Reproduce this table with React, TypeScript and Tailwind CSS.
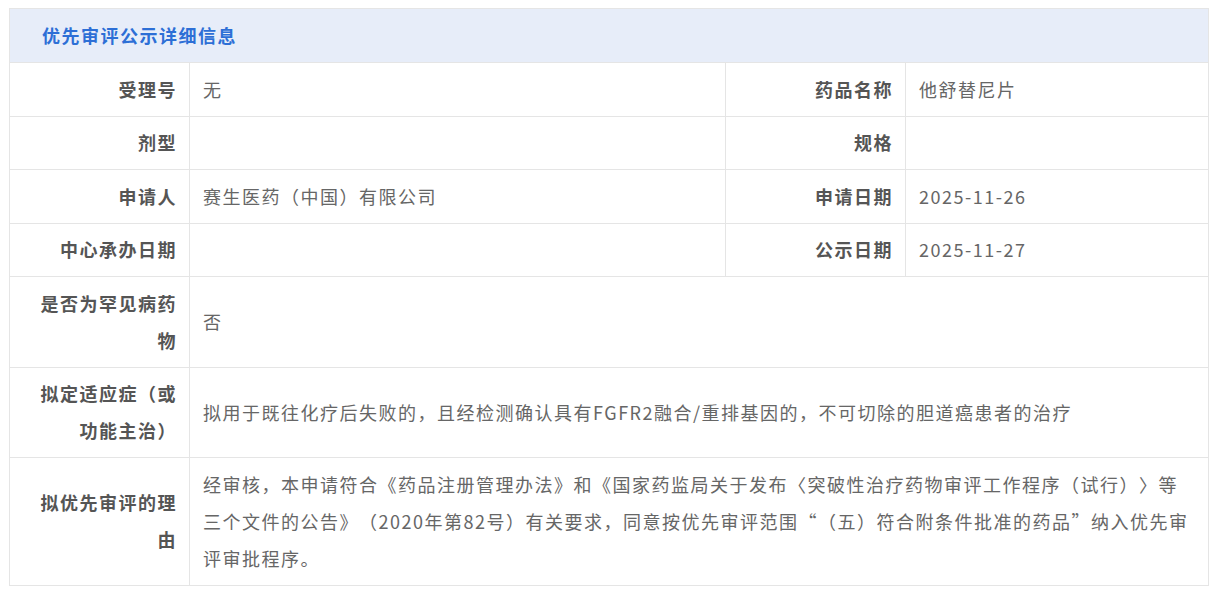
import React from "react";

const font = { fontFamily: '"Microsoft YaHei", "Noto Sans CJK SC", "Noto Sans", sans-serif' };

function Label({ children, className = "" }: { children: React.ReactNode; className?: string }) {
  return (
    <div
      className={`flex items-center justify-end border-r border-b border-[#e5e5e5] pl-[20px] pr-[12px] py-[7.75px] text-right text-[18px] font-bold leading-[37px] tracking-[1.5px] text-[#555] [text-spacing-trim:space-all] ${className}`}
    >
      <div>{children}</div>
    </div>
  );
}

function Value({ children, className = "" }: { children?: React.ReactNode; className?: string }) {
  return (
    <div
      className={`flex items-center border-r border-b border-[#e5e5e5] pl-[13px] pr-[14px] py-[7.75px] text-[18px] leading-[37px] tracking-[1.5px] text-[#666] [text-spacing-trim:space-all] ${className}`}
    >
      <div>{children}</div>
    </div>
  );
}

export default function App() {
  return (
    <div className="min-h-[597px] bg-white pt-[8px] pl-[9px]" style={font}>
      <div className="w-[1200px] border-l border-t border-[#e5e5e5]">
        <div className="flex h-[54px] items-center border-r border-b border-[#e5e5e5] bg-[#e7edf9] pl-[32px]">
          <span className="text-[18px] font-bold tracking-[1.5px] text-[#2d6fd6]">优先审评公示详细信息</span>
        </div>
        <div className="grid grid-cols-[180px_536px_180px_1fr]">
          <Label>受理号</Label>
          <Value>无</Value>
          <Label>药品名称</Label>
          <Value>他舒替尼片</Value>

          <Label>剂型</Label>
          <Value />
          <Label>规格</Label>
          <Value />

          <Label>申请人</Label>
          <Value>赛生医药（中国）有限公司</Value>
          <Label>申请日期</Label>
          <Value>2025-11-26</Value>

          <Label>中心承办日期</Label>
          <Value />
          <Label>公示日期</Label>
          <Value>2025-11-27</Value>

          <Label>是否为罕见病药物</Label>
          <Value className="col-span-3">否</Value>

          <Label>拟定适应症（或功能主治）</Label>
          <Value className="col-span-3">
            拟用于既往化疗后失败的，且经检测确认具有FGFR2融合/重排基因的，不可切除的胆道癌患者的治疗
          </Value>

          <Label>拟优先审评的理由</Label>
          <Value className="col-span-3">
            经审核，本申请符合《药品注册管理办法》和《国家药监局关于发布〈突破性治疗药物审评工作程序（试行）〉等
            <br />
            三个文件的公告》（2020年第82号）有关要求，同意按优先审评范围“（五）符合附条件批准的药品”纳入优先审
            <br />
            评审批程序。
          </Value>
        </div>
      </div>
    </div>
  );
}
